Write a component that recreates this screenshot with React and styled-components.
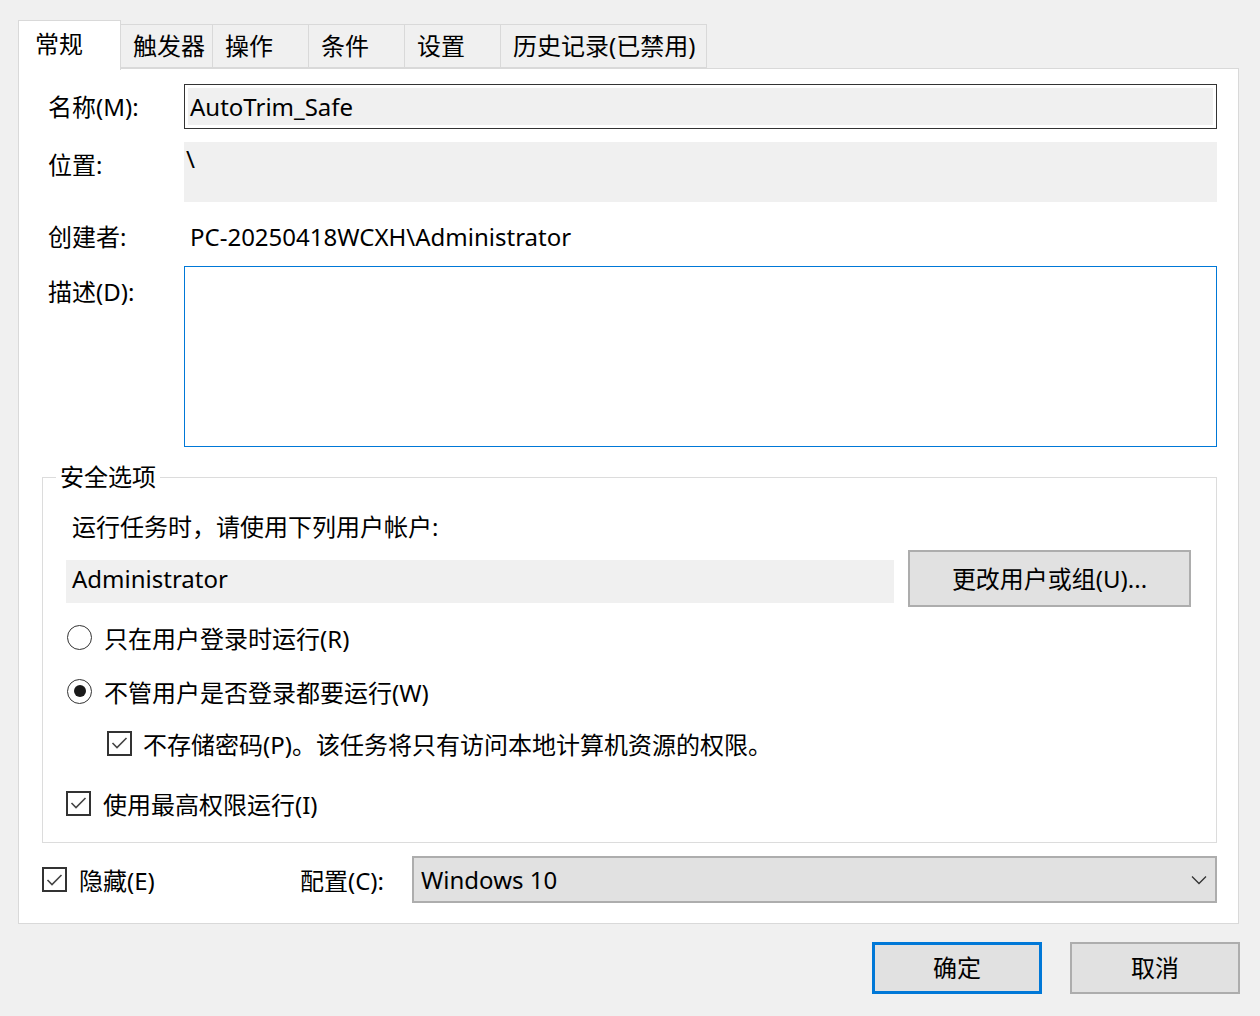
import React from "react";
import styled, { createGlobalStyle } from "styled-components";

const GlobalStyle = createGlobalStyle`
  html, body {
    margin: 0;
    padding: 0;
    background: #f0f0f0;
  }
  body {
    font-family: "Noto Sans", "Noto Sans CJK SC", sans-serif;
    font-size: 24px;
    color: #000;
  }
  * { box-sizing: border-box; }
`;

const Window = styled.div`
  width: 1260px;
  height: 1016px;
  padding: 20px 21px 0 18px;
  background: #f0f0f0;
`;

const TabBar = styled.div`
  display: flex;
  align-items: flex-end;
  height: 48px;
`;

const Tab = styled.div`
  position: relative;
  z-index: ${p => (p.$active ? 1 : 0)};
  width: ${p => p.$w}px;
  height: ${p => (p.$active ? 50 : 44)}px;
  margin-bottom: ${p => (p.$active ? -2 : 0)}px;
  padding: 0 0 ${p => (p.$active ? 4 : 0)}px ${p => (p.$active ? 16 : 12)}px;
  display: flex;
  align-items: center;
  background: ${p => (p.$active ? "#fff" : "#f0f0f0")};
  border: 1px solid #d9d9d9;
  border-bottom: ${p => (p.$active ? "none" : "1px solid #d9d9d9")};
  border-left: ${p => (p.$first ? "1px solid #d9d9d9" : "none")};
  line-height: 1;
  white-space: nowrap;
`;

const Panel = styled.div`
  height: 856px;
  background: #fff;
  border: 1px solid #d9d9d9;
  padding: 15px 21px 20px 23px;
`;

const Form = styled.div`
  display: grid;
  grid-template-columns: 136px 1fr;
  margin-left: 6px;
`;

const Label = styled.div`
  line-height: 34px;
  margin-top: ${p => p.$mt || 0}px;
  padding-top: ${p => p.$pt || 0}px;
  align-self: ${p => (p.$center ? "center" : "start")};
  white-space: nowrap;
`;

const NameBox = styled.div`
  height: 45px;
  border: 1px solid #333;
  padding: 3px;
  background: #fff;
`;

const NameInner = styled.div`
  height: 100%;
  background: #f0f0f0;
  padding-left: 2px;
  display: flex;
  align-items: center;
  line-height: 1;
`;

const ReadBox = styled.div`
  height: 60px;
  margin-top: 13px;
  background: #f0f0f0;
  padding: 2px 0 0 2px;
  line-height: 30px;
`;

const PlainValue = styled.div`
  margin-top: 18px;
  line-height: 34px;
  padding-left: 6px;
  white-space: nowrap;
`;

const TextArea = styled.div`
  height: 181px;
  margin-top: 12px;
  border: 1px solid #0078d7;
  background: #fff;
`;

const Group = styled.fieldset`
  margin: 13px 0 0;
  min-width: 0;
  border: 1px solid #dcdcdc;
  padding: 0 25px 22px 23px;
  display: flex;
  flex-direction: column;
`;

const Legend = styled.legend`
  margin-left: -10px;
  padding: 0 4px;
  line-height: 34px;
`;

const Line = styled.div`
  line-height: 34px;
  margin-top: ${p => p.$mt || 0}px;
  padding-left: ${p => p.$pl || 0}px;
  white-space: nowrap;
`;

const AccountRow = styled.div`
  display: flex;
  align-items: center;
  gap: 14px;
  margin-top: 6px;
`;

const AccountField = styled.div`
  flex: 1;
  height: 43px;
  margin-top: 6px;
  background: #f0f0f0;
  padding: 0 0 6px 6px;
  display: flex;
  align-items: center;
  line-height: 1;
`;

const Button = styled.div`
  width: ${p => p.$w}px;
  height: ${p => p.$h}px;
  display: flex;
  align-items: center;
  justify-content: center;
  background: #e1e1e1;
  border: ${p => (p.$default ? "3px solid #0078d7" : "2px solid #adadad")};
  white-space: nowrap;
  line-height: 1;
`;

const Option = styled.div`
  display: flex;
  align-items: center;
  gap: ${p => p.$gap || 12}px;
  height: 34px;
  margin-top: ${p => p.$mt || 0}px;
  margin-left: ${p => p.$ml || 0}px;
  white-space: nowrap;
`;

const RadioCircle = styled.span`
  width: 25px;
  height: 25px;
  flex: none;
  border: 1.5px solid #333;
  border-radius: 50%;
  display: flex;
  align-items: center;
  justify-content: center;
  &::after {
    content: "";
    width: 12px;
    height: 12px;
    border-radius: 50%;
    background: #1a1a1a;
    display: ${p => (p.$checked ? "block" : "none")};
  }
`;

const Box = styled.span`
  width: 25px;
  height: 25px;
  flex: none;
  border: 2px solid #333;
  background: #fff;
  display: flex;
  align-items: center;
  justify-content: center;
`;

const BottomRow = styled.div`
  display: flex;
  align-items: center;
  margin-top: 13px;
  height: 47px;
`;

const HideOption = styled(Option)`
  width: 258px;
`;

const ConfigLabel = styled.div`
  width: 112px;
  white-space: nowrap;
`;

const Select = styled.div`
  flex: 1;
  height: 47px;
  background: #e1e1e1;
  border: 2px solid #adadad;
  display: flex;
  align-items: center;
  justify-content: space-between;
  padding: 0 8px 0 7px;
  line-height: 1;
`;

const Footer = styled.div`
  display: flex;
  justify-content: flex-end;
  gap: 28px;
  margin-top: 18px;
  margin-right: -1px;
`;

const Check = () => (
  <Box>
    <svg width="17" height="14" viewBox="0 0 17 14">
      <polyline points="1.5,7 6,11.5 15.5,2" fill="none" stroke="#444" strokeWidth="1.6" />
    </svg>
  </Box>
);

const Chevron = () => (
  <svg width="16" height="10" viewBox="0 0 16 10">
    <polyline points="1,1.5 8,8.5 15,1.5" fill="none" stroke="#333" strokeWidth="1.3" />
  </svg>
);

const TABS = [
  { label: "常规", w: 103 },
  { label: "触发器", w: 92 },
  { label: "操作", w: 96 },
  { label: "条件", w: 96 },
  { label: "设置", w: 96 },
  { label: "历史记录(已禁用)", w: 206 },
];

export default function App() {
  return (
    <>
      <GlobalStyle />
      <Window>
        <TabBar>
          {TABS.map((t, i) => (
            <Tab key={t.label} $w={t.w} $active={i === 0} $first={i === 0}>
              {t.label}
            </Tab>
          ))}
        </TabBar>
        <Panel>
          <Form>
            <Label $center>名称(M):</Label>
            <NameBox>
              <NameInner>AutoTrim_Safe</NameInner>
            </NameBox>
            <Label $mt={13} $pt={6}>位置:</Label>
            <ReadBox>\</ReadBox>
            <Label $mt={18}>创建者:</Label>
            <PlainValue>PC-20250418WCXH\Administrator</PlainValue>
            <Label $mt={12} $pt={9}>描述(D):</Label>
            <TextArea />
          </Form>

          <Group>
            <Legend>安全选项</Legend>
            <Line $mt={16} $pl={6}>运行任务时，请使用下列用户帐户:</Line>
            <AccountRow>
              <AccountField>Administrator</AccountField>
              <Button $w={283} $h={57}>更改用户或组(U)...</Button>
            </AccountRow>
            <Option $mt={13} $ml={1}>
              <RadioCircle />
              只在用户登录时运行(R)
            </Option>
            <Option $mt={20} $ml={1}>
              <RadioCircle $checked />
              不管用户是否登录都要运行(W)
            </Option>
            <Option $mt={18} $ml={41} $gap={11}>
              <Check />
              不存储密码(P)。该任务将只有访问本地计算机资源的权限。
            </Option>
            <Option $mt={26}>
              <Check />
              使用最高权限运行(I)
            </Option>
          </Group>

          <BottomRow>
            <HideOption>
              <Check />
              隐藏(E)
            </HideOption>
            <ConfigLabel>配置(C):</ConfigLabel>
            <Select>
              Windows 10
              <Chevron />
            </Select>
          </BottomRow>
        </Panel>
        <Footer>
          <Button $w={170} $h={52} $default>确定</Button>
          <Button $w={170} $h={52}>取消</Button>
        </Footer>
      </Window>
    </>
  );
}
